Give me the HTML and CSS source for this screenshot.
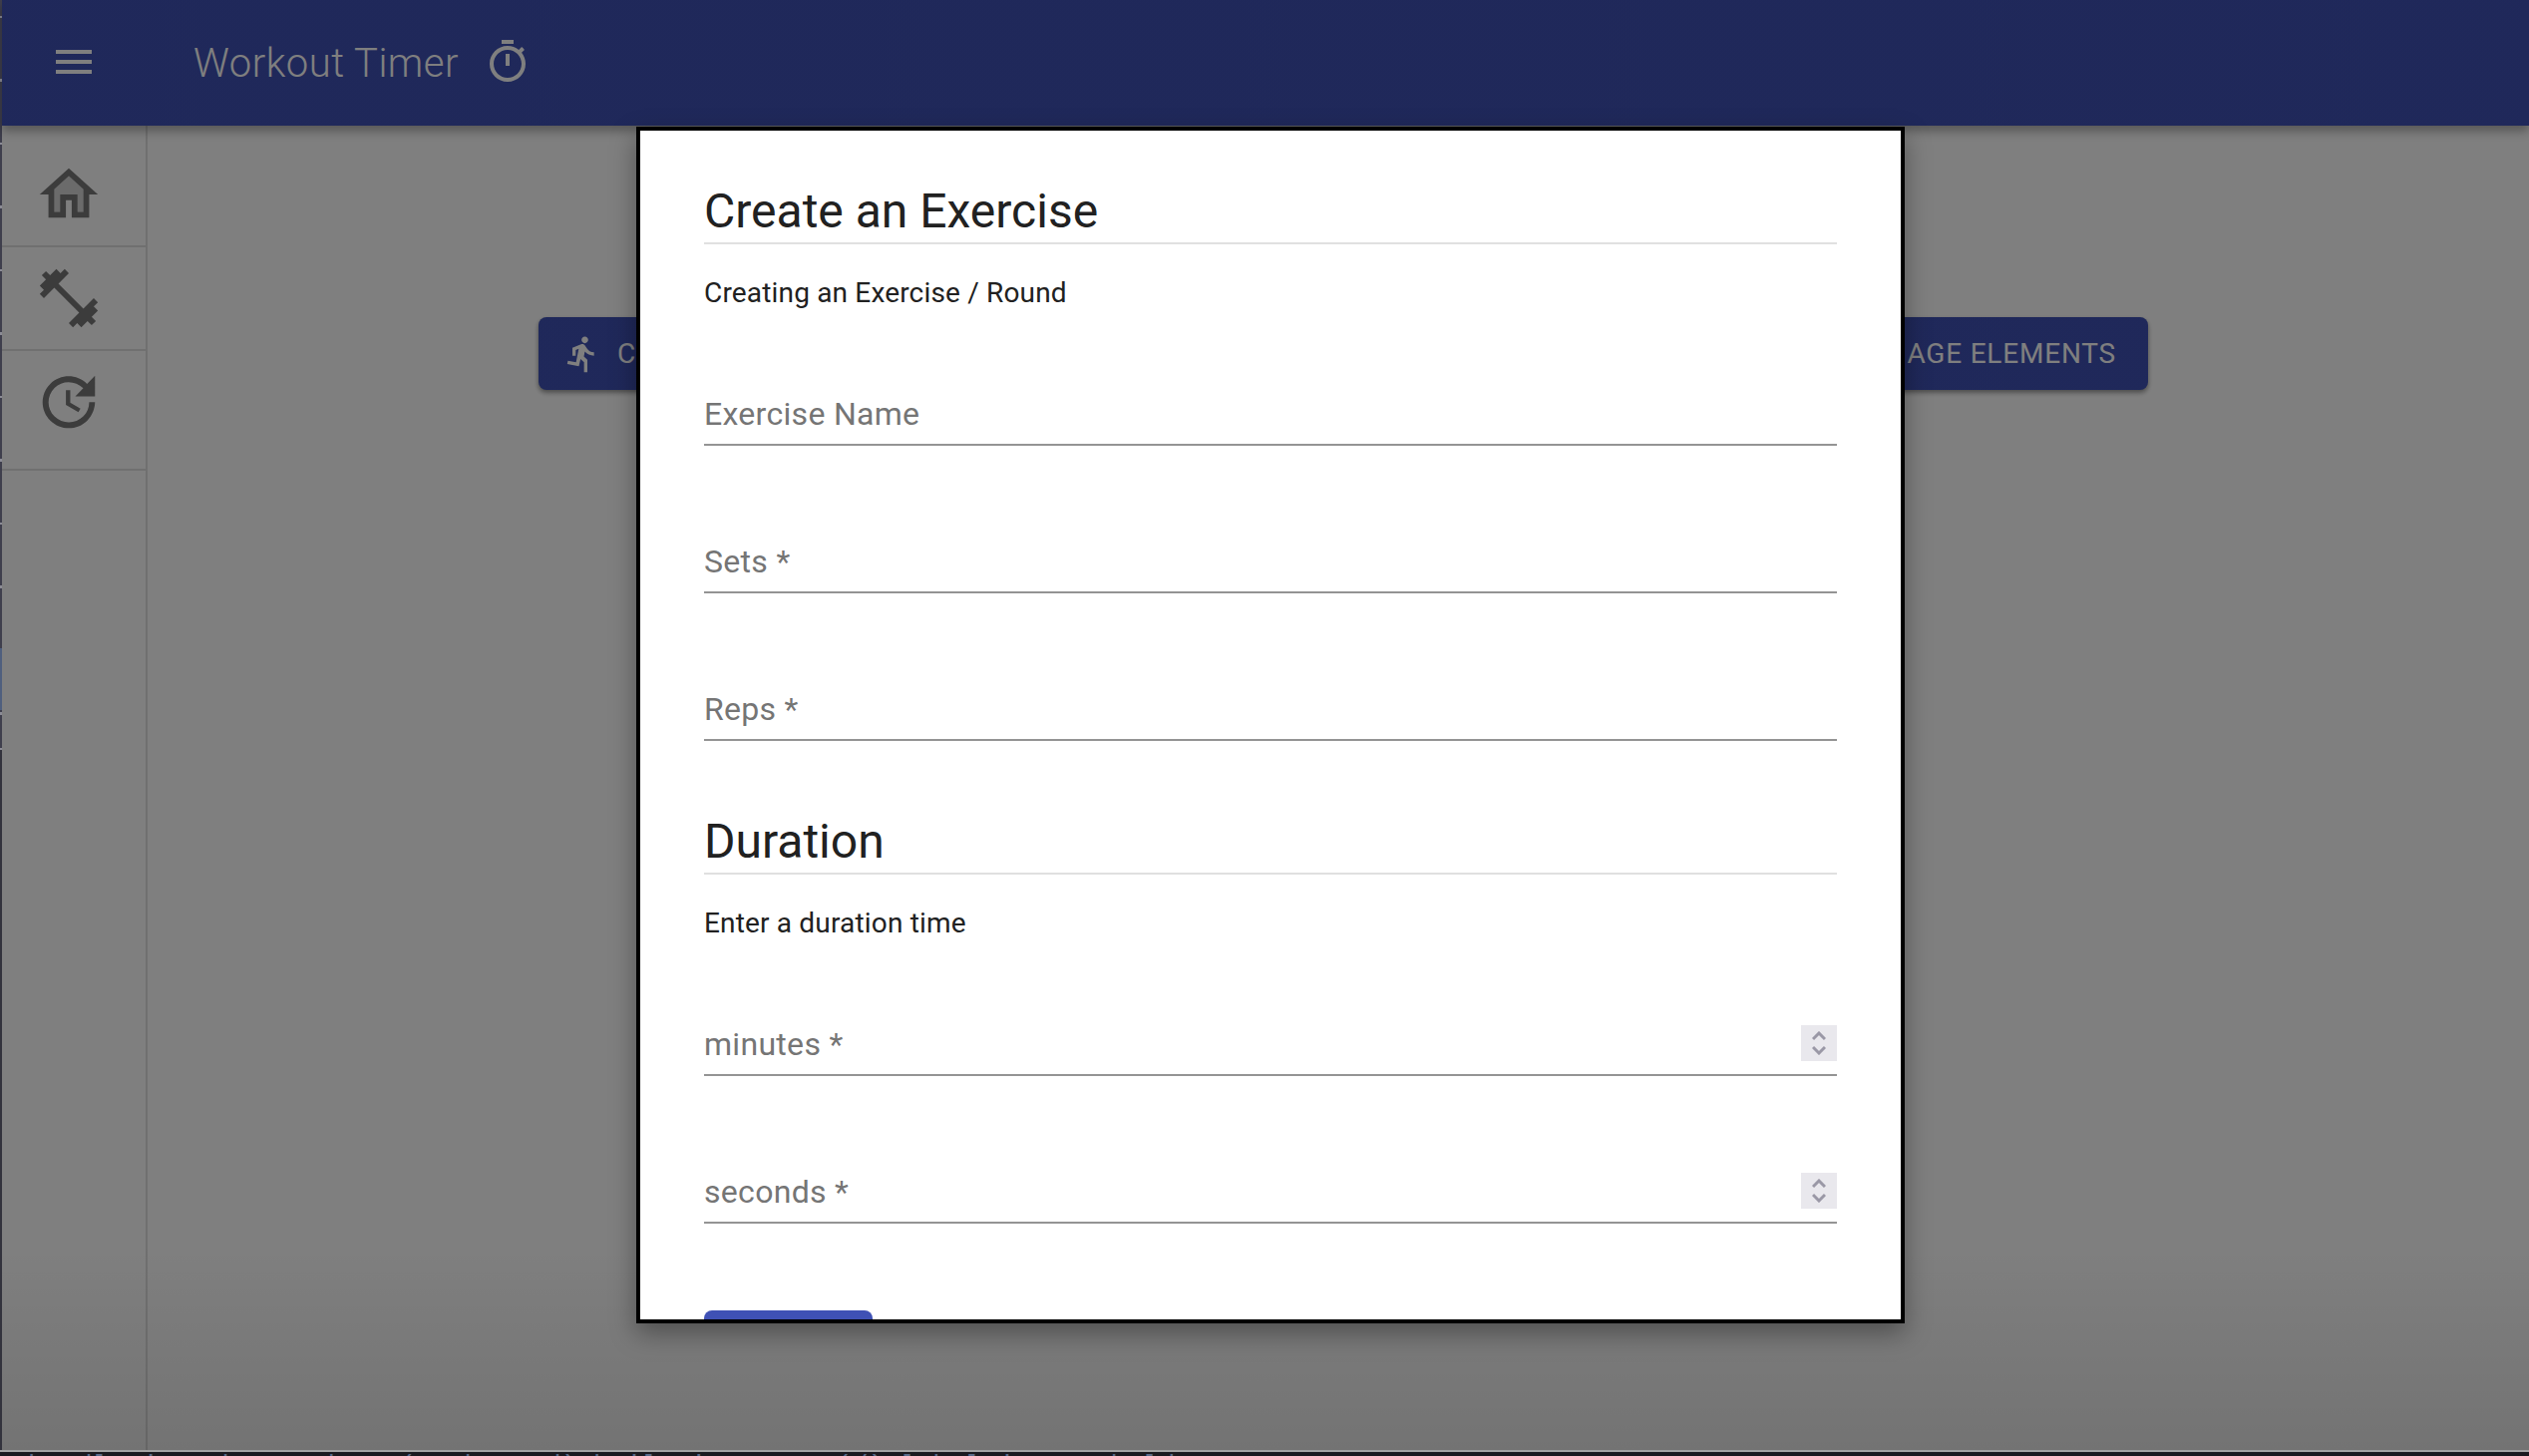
FILE: index.html
```html
<!DOCTYPE html>
<html lang="en">
<head>
    <meta charset="UTF-8">
    <meta name="viewport" content="width=device-width, initial-scale=1.0">
    <title>Workout Timer</title>
    <link rel="stylesheet" href="styles.css">
</head>
<body>
    <div class="window-row">
        <div class="edge-strip"></div>
        <div class="app">
            <header class="app-bar">
                <svg class="menu-icon" viewBox="0 0 24 24"><path d="M3 18h18v-2H3v2zm0-5h18v-2H3v2zm0-7v2h18V6H3z"/></svg>
                <span class="app-title">Workout Timer</span>
                <svg class="timer-icon" viewBox="0 0 24 24"><path d="M15 1H9v2h6V1zm-4 13h2V8h-2v6zm8.03-6.61l1.42-1.42c-.43-.51-.9-.99-1.41-1.41l-1.42 1.42C16.07 4.74 14.12 4 12 4c-4.97 0-9 4.03-9 9s4.02 9 9 9 9-4.03 9-9c0-2.12-.74-4.07-1.97-5.61zM12 20c-3.87 0-7-3.13-7-7s3.13-7 7-7 7 3.13 7 7-3.13 7-7 7z"/></svg>
            </header>
            <div class="app-body">
                <nav class="side-nav">
                    <div class="nav-list">
                        <div class="nav-item">
                            <svg class="nav-icon" viewBox="0 0 24 24"><path opacity=".3" d="M12 5.69l-5 4.5V18h2v-6h6v6h2v-7.81z"/><path d="M12 5.69l5 4.5V18h-2v-6H9v6H7v-7.81l5-4.5M12 3L2 12h3v8h6v-6h2v6h6v-8h3L12 3z"/></svg>
                        </div>
                        <div class="nav-item">
                            <svg class="nav-icon" viewBox="0 0 24 24"><path d="M20.57 14.86L22 13.43 20.57 12 17 15.57 8.43 7 12 3.43 10.57 2 9.14 3.43 7.71 2 5.57 4.14 4.14 2.71 2.71 4.14l1.43 1.43L2 7.71l1.43 1.43L2 10.57 3.43 12 7 8.43 15.57 17 12 20.57 13.43 22l1.43-1.43L16.29 22l2.14-2.14 1.43 1.43 1.43-1.43-1.43-1.43L22 16.29z"/></svg>
                        </div>
                        <div class="nav-item">
                            <svg class="nav-icon" viewBox="0 0 24 24"><path d="M21 10.12h-6.78l2.74-2.82c-2.73-2.7-7.15-2.8-9.88-.1-2.73 2.71-2.73 7.08 0 9.79s7.15 2.71 9.88 0C18.32 15.65 19 14.08 19 12.1h2c0 1.98-.88 4.55-2.64 6.29-3.51 3.48-9.21 3.48-12.72 0-3.5-3.47-3.53-9.11-.02-12.58s9.14-3.47 12.65 0L21 3v7.12zM12.5 8v4.25l3.5 2.08-.72 1.21L11 13V8h1.5z"/></svg>
                        </div>
                    </div>
                </nav>
                <main class="content">
                    <div class="action-group">
                        <button class="action-button">
                            <svg class="run-icon" viewBox="0 0 24 24"><path d="M13.49 5.48c1.1 0 2-.9 2-2s-.9-2-2-2-2 .9-2 2 .9 2 2 2zm-3.6 13.9l1-4.4 2.1 2v6h2v-7.5l-2.1-2 .6-3c1.3 1.5 3.3 2.5 5.5 2.5v-2c-1.9 0-3.5-1-4.3-2.4l-1-1.6c-.4-.6-1-1-1.7-1-.3 0-.5.1-.8.1l-5.2 2.2v4.7h2v-3.4l1.8-.7-1.6 8.1-4.9-1-.4 2 7 1.4z"/></svg>
                            CREATE
                        </button>
                        <button class="action-button">MANAGE ELEMENTS</button>
                    </div>
                </main>
            </div>

            <div class="backdrop">
                <div class="modal">
                    <h2 class="section-title">Create an Exercise</h2>
                    <p class="section-note">Creating an Exercise / Round</p>
                    <div class="field first-field"><span class="field-label">Exercise Name</span></div>
                    <div class="field"><span class="field-label">Sets *</span></div>
                    <div class="field"><span class="field-label">Reps *</span></div>

                    <h2 class="section-title duration-title">Duration</h2>
                    <p class="section-note">Enter a duration time</p>
                    <div class="field first-field">
                        <span class="field-label">minutes *</span>
                        <span class="spinner">
                            <svg viewBox="0 0 14 24"><path d="M1 8l6-6 6 6M1 16l6 6 6-6"/></svg>
                        </span>
                    </div>
                    <div class="field">
                        <span class="field-label">seconds *</span>
                        <span class="spinner">
                            <svg viewBox="0 0 14 24"><path d="M1 8l6-6 6 6M1 16l6 6 6-6"/></svg>
                        </span>
                    </div>
                    <div class="submit-button"></div>
                </div>
            </div>
        </div>
    </div>
    <div class="window-edge"></div>
    <div class="under-window">bundle.js:1 hot update (1 changed) built in 201ms (/) label.jsx:14 hold</div>
</body>
</html>
```

FILE: styles.css
```css
* {
    box-sizing: border-box;
}
body {
    font-family: 'Roboto', sans-serif;
    margin: 0;
    height: 100vh;
    overflow: hidden;
    background-color: #1b1b20;
    display: flex;
    flex-direction: column;
}
svg {
    display: block;
    fill: currentColor;
}

/* desktop bits around the browser window */
.window-row {
    display: flex;
    height: 1454px;
}
.edge-strip {
    width: 2px;
    background:
        linear-gradient(#8c8c96, #8c8c96) 0 750px / 2px 2px no-repeat,
        linear-gradient(#4f5f7e, #4f5f7e) 0 650px / 2px 62px no-repeat,
        linear-gradient(#33333d, #33333d) 0 752px / 2px 702px no-repeat,
        repeating-linear-gradient(#8c8c96 0 2px, #3f3f4d 2px 63.5px) 0 16px,
        #555;
}
.window-edge {
    height: 2px;
    background-color: #a3a3a3;
}
.under-window {
    height: 4px;
    overflow: hidden;
    padding-left: 28px;
    font-family: 'Liberation Mono', monospace;
    font-size: 27px;
    line-height: 30px;
    white-space: nowrap;
    color: #5a6b88;
}

/* app */
.app {
    position: relative;
    flex: 1;
    display: flex;
    flex-direction: column;
    background-color: #fff;
}
.app-bar {
    position: relative;
    height: 126px;
    display: flex;
    align-items: center;
    padding: 0 0 2px 48px;
    background-color: #3f51b5;
    color: #fff;
    box-shadow: 0 4px 8px rgba(0, 0, 0, 0.2), 0 8px 10px rgba(0, 0, 0, 0.14);
}
.menu-icon {
    width: 48px;
    height: 48px;
}
.app-title {
    margin: 2px 0 0 96px;
    font-size: 40px;
    font-weight: 300;
    letter-spacing: 0.5px;
}
.timer-icon {
    width: 48px;
    height: 48px;
    margin-left: 25px;
}
.app-body {
    flex: 1;
    display: flex;
}
.side-nav {
    width: 146px;
    border-right: 2px solid #e0e0e0;
    color: #787878;
}
.nav-list {
    padding: 18px 0 16px;
    border-bottom: 2px solid #e0e0e0;
}
.nav-item {
    padding: 16px 32px;
    border-bottom: 2px solid #e0e0e0;
}
.nav-item:last-child {
    border-bottom: none;
}
.nav-icon {
    width: 70px;
    height: 70px;
}
.content {
    flex: 1;
    padding: 192px 382px 0 392px;
}
.action-group {
    display: flex;
    height: 73px;
    border-radius: 8px;
    background-color: #3f51b5;
    box-shadow: 0 3px 5px rgba(0, 0, 0, 0.3), 0 2px 4px rgba(0, 0, 0, 0.15);
}
.action-button {
    flex: 1;
    display: flex;
    align-items: center;
    padding: 0 32px 0 24px;
    border: none;
    background: none;
    color: #fff;
    font-family: inherit;
    font-size: 28px;
    letter-spacing: 0.8px;
}
.action-button:last-child {
    justify-content: flex-end;
}
.run-icon {
    width: 40px;
    height: 40px;
    margin-right: 15px;
}

/* modal */
.backdrop {
    position: absolute;
    inset: 0;
    display: flex;
    justify-content: center;
    padding: 127px 0 0 10px;
    background: linear-gradient(rgba(0, 0, 0, 0.5) 86%, rgba(0, 0, 0, 0.55) 100%);
}
.modal {
    width: 1272px;
    height: 1200px;
    padding: 53px 64px 0;
    overflow: hidden;
    border: 4px solid #000;
    background-color: #fff;
    box-shadow: 0 10px 24px rgba(0, 0, 0, 0.35);
}
.section-title {
    margin: 0;
    padding-bottom: 3px;
    border-bottom: 2px solid #e0e0e0;
    font-size: 48px;
    font-weight: 400;
    line-height: 56px;
    color: #212121;
}
.section-note {
    margin: 32px 0 0;
    font-size: 28px;
    line-height: 34px;
    letter-spacing: 0.17px;
    color: #212121;
}
.field {
    height: 60px;
    margin-top: 88px;
    padding-bottom: 4px;
    display: flex;
    align-items: center;
    justify-content: space-between;
    border-bottom: 2px solid #949494;
}
.first-field {
    margin-top: 76px;
}
.field-label {
    padding-top: 2px;
    font-size: 32px;
    letter-spacing: 0.3px;
    color: #757575;
}
.spinner {
    width: 36px;
    height: 36px;
    padding: 6px 11px;
    background-color: #e9e8ed;
    color: #9a98a6;
}
.spinner svg {
    width: 14px;
    height: 24px;
    fill: none;
    stroke: currentColor;
    stroke-width: 3;
}
.duration-title {
    margin-top: 73px;
}
.submit-button {
    width: 169px;
    height: 73px;
    margin-top: 87px;
    border-radius: 8px;
    background-color: #3f51b5;
}
```
